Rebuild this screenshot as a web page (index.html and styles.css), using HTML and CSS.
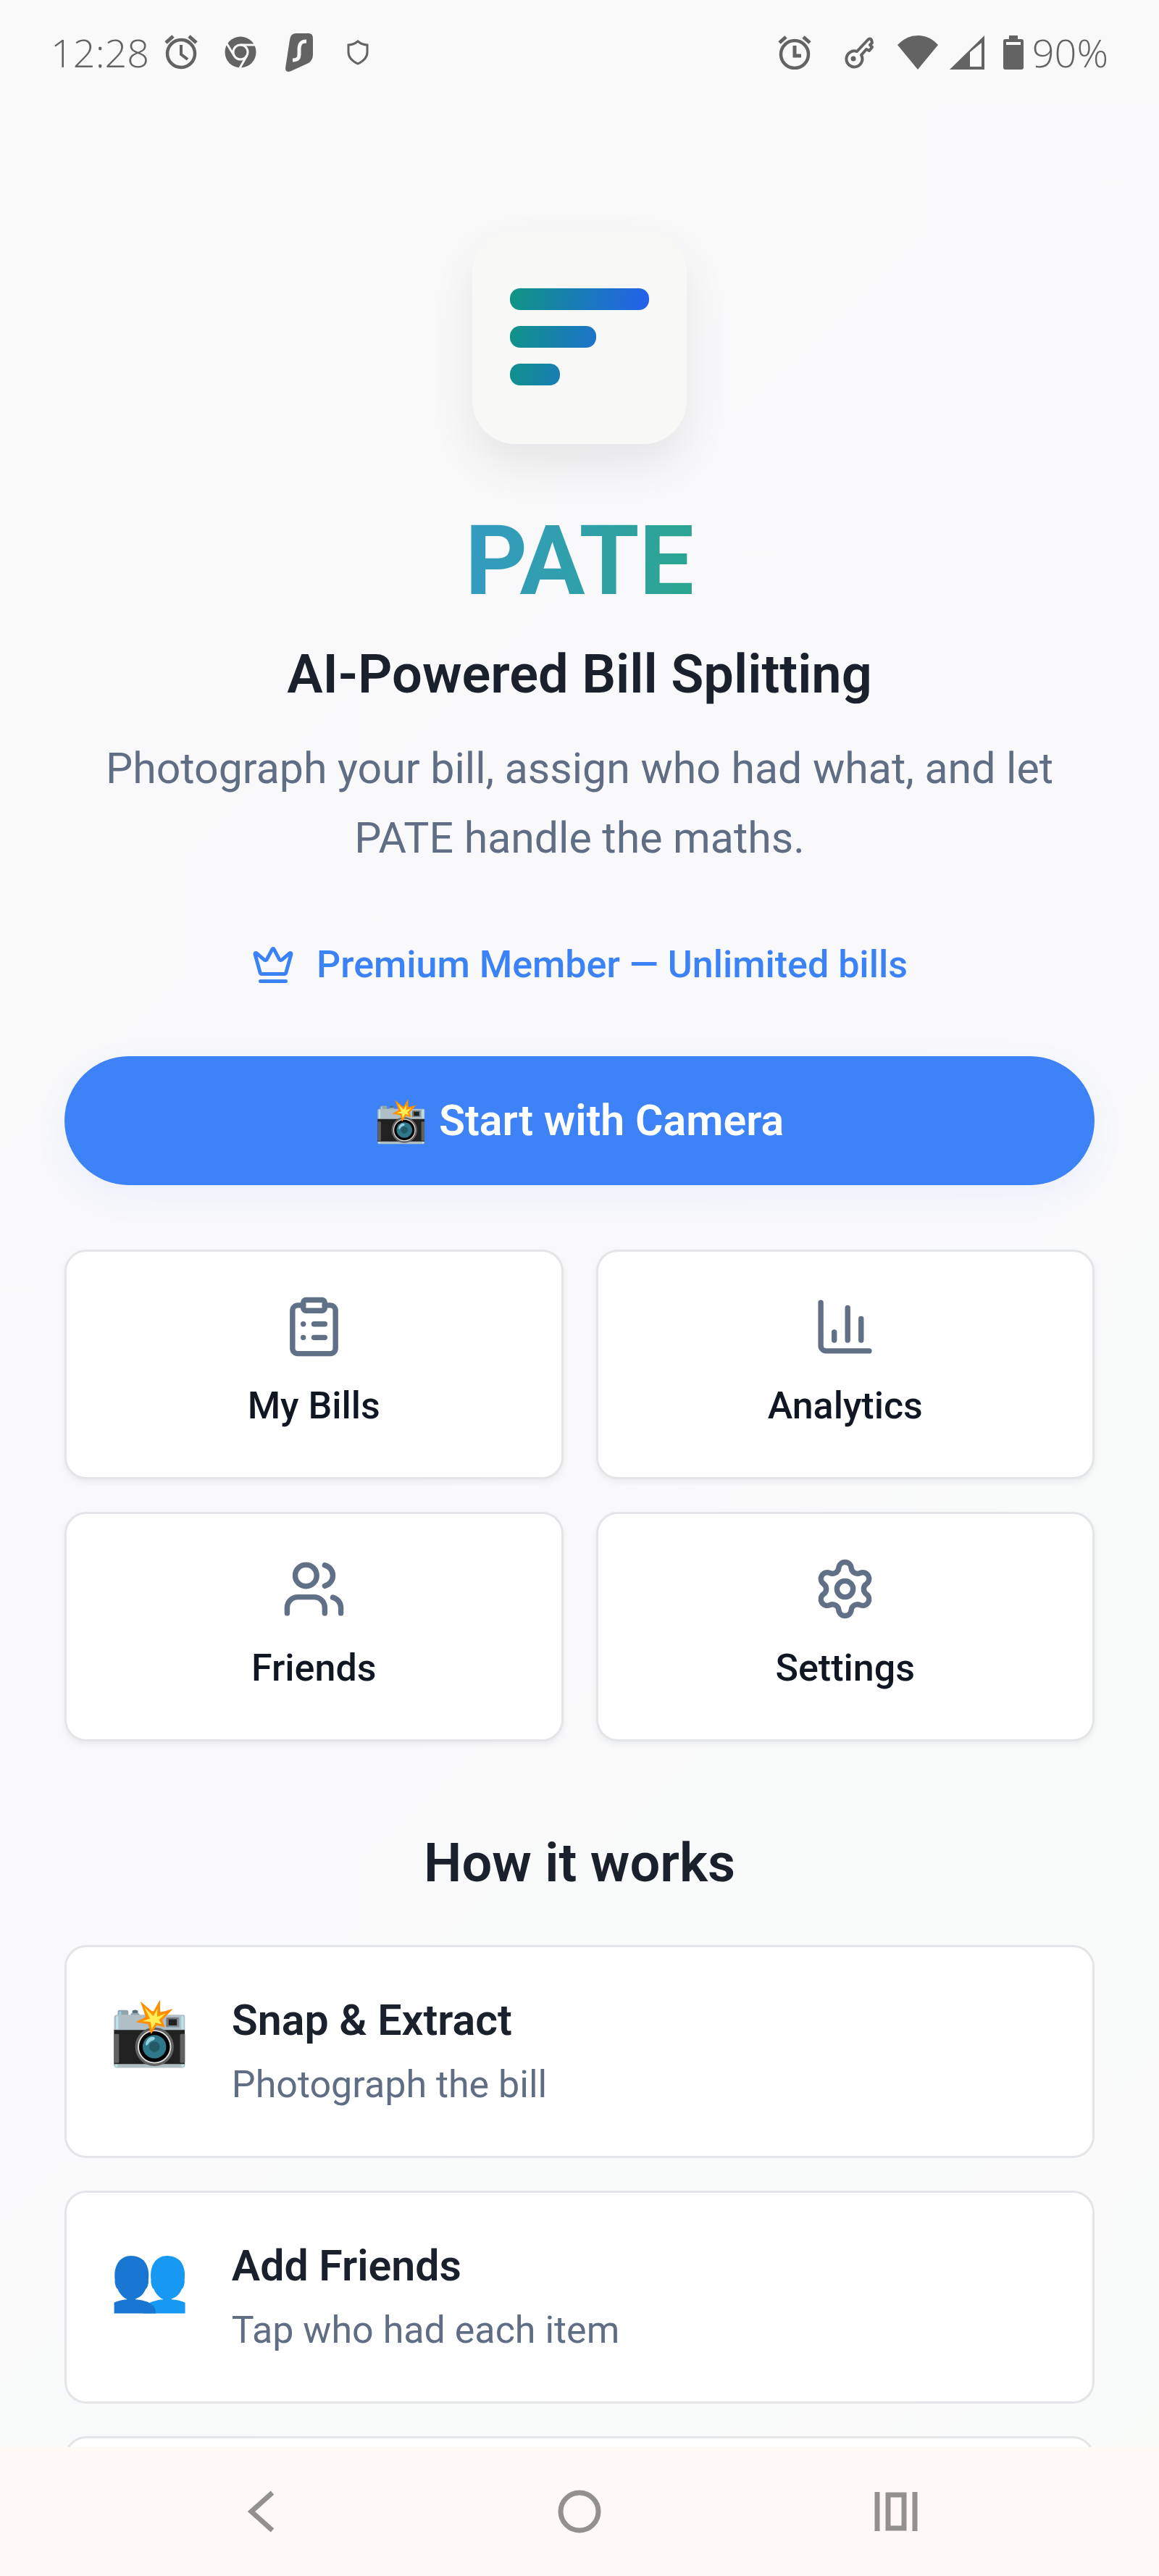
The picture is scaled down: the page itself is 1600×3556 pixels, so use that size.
FILE: index.html
```
<!DOCTYPE html>
<html lang="en">
<head>
<meta charset="utf-8">
<meta name="viewport" content="width=device-width, initial-scale=1">
<title>PATE</title>
<link rel="stylesheet" href="styles.css">
</head>
<body>
<div class="app">
  <header class="status">
    <div class="status-group">
      <span>12:28</span>
      <svg class="s-alarm" viewBox="0 0 48 48" fill="none" stroke="currentColor"><circle cx="24" cy="26" r="19" stroke-width="4.500"/><path d="M24 14v13l9 7" stroke-width="4"/><path d="M3 11l10-9M45 11L35 2" stroke-width="5"/></svg>
      <svg class="s-chrome" viewBox="0 0 44 44"><circle cx="22" cy="22" r="21.500" fill="currentColor"/><circle cx="22" cy="22" r="10" fill="none" stroke="#f9f9f9" stroke-width="3"/><path d="M22 12h20M13.300 27L3 10M30.700 27L21 44" stroke="#f9f9f9" stroke-width="3"/></svg>
      <svg class="s-shark" viewBox="0 0 44 54"><path d="M19 1h17q6 0 6 7v22q0 8-6 12L12 53q-8 3-8-4L10 10q1-9 9-9z" fill="currentColor"/><path d="M33 12c-8 0-10 4-10 11v7c0 6-3 8-9 8" fill="none" stroke="#f9f9f9" stroke-width="5"/></svg>
      <svg class="s-shield" viewBox="0 0 48 48" fill="none" stroke="currentColor" stroke-width="3"><path d="M24 9q6 5 13 5v10q0 10-13 16Q11 34 11 24V14q7 0 13-5z"/></svg>
    </div>
    <div class="status-group">
      <svg class="s-slot" viewBox="0 0 48 48" fill="none" stroke="currentColor"><circle cx="24" cy="27" r="19" stroke-width="4.500"/><path d="M24 15v14h9" stroke-width="5"/><path d="M3 11l9-8M45 11l-9-8" stroke-width="5"/></svg>
      <svg class="s-slot" viewBox="0 0 48 48" fill="none" stroke="currentColor" stroke-width="4" stroke-linejoin="round"><path d="M22 23L37 7q3-3 5 0l1 4-3 3 3 3-4 5-4-2-7 8a11 11 0 1 1-6-5z"/><circle cx="17" cy="33" r="3.500" fill="currentColor" stroke="none"/></svg>
      <svg class="s-wifi" viewBox="0 0 58 48" fill="currentColor"><path d="M29 48L1 14Q13 1 29 1t28 13z"/></svg>
      <svg class="s-signal" viewBox="0 0 48 48"><path d="M0 48L48 1v47z" fill="currentColor"/><path d="M28 24l16-13v33H28z" fill="#f9f9f9"/></svg>
      <svg class="s-battery" viewBox="0 0 28 48"><path d="M8 1h12v5h5q3 0 3 3v36q0 3-3 3H3q-3 0-3-3V9q0-3 3-3h5z" fill="currentColor"/><path d="M4 10h20v4H4z" fill="#f9f9f9"/></svg>
      <span>90%</span>
    </div>
  </header>

  <main class="content">
    <section class="hero">
      <svg class="logo" viewBox="0 0 296 296" role="img" aria-label="PATE logo">
        <defs><linearGradient id="bars" gradientUnits="userSpaceOnUse" x1="52" y1="96" x2="244" y2="130"><stop offset="0" stop-color="#0f9584"/><stop offset="1" stop-color="#2460ee"/></linearGradient></defs>
        <g fill="url(#bars)"><rect x="52" y="81" width="192" height="30" rx="14"/><rect x="52" y="133" width="119" height="30" rx="14"/><rect x="52" y="185" width="69" height="30" rx="14"/></g>
      </svg>
      <h1 class="brand">PATE</h1>
      <h2 class="heading">AI-Powered Bill Splitting</h2>
      <p class="lead">Photograph your bill, assign who had what, and let PATE handle the maths.</p>
      <p class="premium">
        <svg class="crown" viewBox="0 0 24 24"><path d="M11.562 3.266a.5.5 0 0 1 .876 0L15.390 8.870a1 1 0 0 0 1.516.294L21.183 5.500a.5.5 0 0 1 .798.519l-2.834 10.246a1 1 0 0 1-.956.734H5.810a1 1 0 0 1-.957-.734L2.020 6.020a.5.5 0 0 1 .798-.519l4.276 3.664a1 1 0 0 0 1.516-.294z"/><path d="M5 21h14"/></svg>
        <span>Premium Member — Unlimited bills</span>
      </p>
      <button class="start" type="button">📸 Start with Camera</button>
    </section>

    <nav class="tiles" aria-label="Sections">
      <button class="tile" type="button">
        <svg viewBox="0 0 24 24"><rect x="8" y="2" width="8" height="4" rx="1"/><path d="M16 4h2a2 2 0 0 1 2 2v14a2 2 0 0 1-2 2H6a2 2 0 0 1-2-2V6a2 2 0 0 1 2-2h2M12 11h4M12 16h4M8 11h.01M8 16h.01"/></svg>
        My Bills
      </button>
      <button class="tile" type="button">
        <svg viewBox="0 0 24 24"><path d="M3 3v16a2 2 0 0 0 2 2h16M18 17V9M13 17V5M8 17v-3"/></svg>
        Analytics
      </button>
      <button class="tile" type="button">
        <svg viewBox="0 0 24 24"><path d="M16 21v-2a4 4 0 0 0-4-4H6a4 4 0 0 0-4 4v2M22 21v-2a4 4 0 0 0-3-3.870M16 3.130a4 4 0 0 1 0 7.750"/><circle cx="9" cy="7" r="4"/></svg>
        Friends
      </button>
      <button class="tile" type="button">
        <svg viewBox="0 0 24 24"><path d="M9.671 4.136a2.340 2.340 0 0 1 4.659 0 2.340 2.340 0 0 0 3.319 1.915 2.340 2.340 0 0 1 2.330 4.033 2.340 2.340 0 0 0 0 3.831 2.340 2.340 0 0 1-2.330 4.033 2.340 2.340 0 0 0-3.319 1.915 2.340 2.340 0 0 1-4.659 0 2.340 2.340 0 0 0-3.320-1.915 2.340 2.340 0 0 1-2.330-4.033 2.340 2.340 0 0 0 0-3.831A2.340 2.340 0 0 1 6.350 6.051a2.340 2.340 0 0 0 3.319-1.915"/><circle cx="12" cy="12" r="3"/></svg>
        Settings
      </button>
    </nav>

    <section class="how">
      <h2 class="heading">How it works</h2>
      <ol class="steps">
        <li class="step">
          <span class="emoji">📸</span>
          <div><h3 class="step-title">Snap &amp; Extract</h3><p class="step-text">Photograph the bill</p></div>
        </li>
        <li class="step">
          <span class="emoji">👥</span>
          <div><h3 class="step-title">Add Friends</h3><p class="step-text">Tap who had each item</p></div>
        </li>
        <li class="step"></li>
      </ol>
    </section>
  </main>

  <nav class="system" aria-label="System navigation">
    <button type="button" aria-label="Back"><svg viewBox="0 0 60 60"><path d="M43 4L14 30l29 26"/></svg></button>
    <button type="button" aria-label="Home"><svg viewBox="0 0 60 60"><circle cx="30" cy="30" r="26"/></svg></button>
    <button type="button" aria-label="Recent apps"><svg viewBox="0 0 60 60"><path d="M4 3v54M56 3v54M19 7h22v46H19z"/></svg></button>
  </nav>
</div>
</body>
</html>
```
FILE: styles.css
```
* {
  box-sizing: border-box;
}

body {
  margin: 0;
  font-family: Roboto, "Noto Color Emoji", sans-serif;
  color: #1a202c;
}

h1, h2, h3, p, ol {
  margin: 0;
  padding: 0;
}

button {
  font: inherit;
  cursor: pointer;
}

.app {
  display: flex;
  flex-direction: column;
  height: 100vh;
  background: linear-gradient(135deg, #f9f9fa, #f9f9fb 50%, #f9fbf9);
}

.status {
  display: flex;
  flex: none;
  justify-content: space-between;
  align-items: center;
  height: 144px;
  padding: 0 70px;
  background: #f9f9f9;
  color: #636363;
  font: 300 54px/54px "Open Sans", sans-serif;
}

.status-group {
  display: flex;
  align-items: center;
}

.status svg {
  height: 48px;
}

.status .s-alarm {
  width: 48px;
  margin-left: 20px;
}

.status .s-chrome {
  width: 44px;
  height: 44px;
  margin-left: 36px;
}

.status .s-shark {
  width: 44px;
  height: 54px;
  margin-left: 36px;
}

.status .s-shield {
  width: 48px;
  margin-left: 36px;
}

.status .s-slot {
  width: 88px;
}

.status .s-wifi {
  width: 76px;
}

.status .s-signal {
  width: 60px;
}

.status .s-battery {
  width: 28px;
  margin: 0 12px 0 20px;
}

.content {
  flex: 1;
  min-height: 0;
  padding: 173px 89px 89px;
  overflow-y: auto;
  scrollbar-width: none;
}

.hero {
  display: flex;
  flex-direction: column;
  align-items: center;
  text-align: center;
}

.logo {
  width: 296px;
  height: 296px;
  border-radius: 60px;
  background: #f8f9f6;
  box-shadow: 0 30px 60px rgba(0, 0, 0, 0.08);
}

.brand {
  margin-top: 88px;
  font-size: 134px;
  line-height: 148px;
  font-weight: 700;
  color: transparent;
  background: linear-gradient(100deg, #359ac4, #2aa68e);
  background-clip: text;
}

.heading {
  font-size: 74px;
  line-height: 96px;
  font-weight: 600;
  text-align: center;
}

.hero .heading {
  margin-top: 34px;
}

.lead {
  margin-top: 34px;
  font-size: 59px;
  line-height: 96px;
  color: #5f6e84;
}

.premium {
  display: flex;
  align-items: center;
  gap: 30px;
  margin-top: 88px;
  font-size: 52px;
  line-height: 78px;
  font-weight: 500;
  color: #3b82f6;
}

.crown {
  width: 60px;
  height: 60px;
  fill: none;
  stroke: currentColor;
  stroke-width: 2;
  stroke-linecap: round;
  stroke-linejoin: round;
}

.start {
  width: 100%;
  margin-top: 87px;
  padding: 47px 60px;
  border: 0;
  border-radius: 89px;
  background: #3d82f6;
  box-shadow: 0 15px 44px rgba(59, 130, 246, 0.08);
  color: #fff;
  font-size: 59px;
  line-height: 84px;
  font-weight: 600;
}

.tiles {
  display: grid;
  grid-template-columns: 1fr 1fr;
  gap: 45px;
  margin-top: 89px;
}

.tile {
  display: flex;
  flex-direction: column;
  align-items: center;
  gap: 26px;
  padding: 59px;
  border: 3px solid #e3e5e8;
  border-radius: 30px;
  background: #fff;
  box-shadow: 0 4px 8px rgba(0, 0, 0, 0.06);
  color: #111722;
  font-size: 52px;
  line-height: 78px;
  font-weight: 500;
}

.tile svg {
  width: 89px;
  height: 89px;
  fill: none;
  stroke: #607086;
  stroke-width: 2;
  stroke-linecap: round;
  stroke-linejoin: round;
}

.how {
  margin-top: 120px;
}

.steps {
  display: grid;
  gap: 45px;
  margin-top: 65px;
  list-style: none;
}

.step {
  display: flex;
  align-items: flex-start;
  gap: 58px;
  min-height: 294px;
  padding: 59px;
  border: 3px solid #e3e5e8;
  border-radius: 30px;
  background: #fff;
}

.emoji {
  font-size: 89px;
  line-height: 118px;
}

.step-title {
  font-size: 59px;
  line-height: 84px;
  font-weight: 600;
}

.step-text {
  margin-top: 8px;
  font-size: 52px;
  line-height: 78px;
  color: #5f6e84;
}

.system {
  display: flex;
  flex: none;
  justify-content: space-evenly;
  padding: 0 9%;
  background: #fff9f5;
}

.system button {
  display: flex;
  flex: 1;
  justify-content: center;
  padding: 59px 0;
  border: 0;
  background: none;
}

.system svg {
  width: 60px;
  height: 60px;
  fill: none;
  stroke: #93918e;
  stroke-width: 7;
}
```
